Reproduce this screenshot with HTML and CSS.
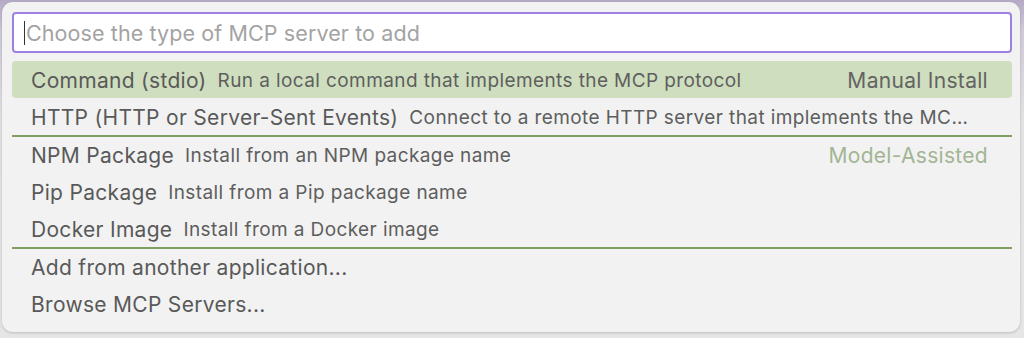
FILE: index.html
```html
<!DOCTYPE html>
<html lang="en">
<head>
<meta charset="utf-8">
<title>Add MCP server</title>
<link rel="stylesheet" href="styles.css">
</head>
<body>
<div class="panel">
  <div class="input"><span class="caret"></span><span class="placeholder">Choose the type of MCP server to add</span></div>
  <ul class="list">
    <li class="row selected"><span class="label">Command (stdio)</span><span class="desc">Run a local command that implements the MCP protocol</span><span class="group">Manual Install</span></li>
    <li class="row"><span class="label">HTTP (HTTP or Server-Sent Events)</span><span class="desc">Connect to a remote HTTP server that implements the MC…</span></li>
    <li class="row sep"><span class="label">NPM Package</span><span class="desc">Install from an NPM package name</span><span class="group muted">Model-Assisted</span></li>
    <li class="row"><span class="label">Pip Package</span><span class="desc">Install from a Pip package name</span></li>
    <li class="row"><span class="label">Docker Image</span><span class="desc">Install from a Docker image</span></li>
    <li class="row sep"><span class="label">Add from another application...</span></li>
    <li class="row"><span class="label">Browse MCP Servers...</span></li>
  </ul>
</div>
</body>
</html>
```

FILE: styles.css
```css
* { box-sizing: border-box; }
html, body { margin: 0; padding: 0; }
body {
  width: 1024px;
  height: 338px;
  overflow: hidden;
  background: linear-gradient(180deg, #b4aac6 0px, #cfc9d9 30px, #e3e3e3 120px, #e6e6e6 100%);
  font-family: Inter, "Noto Sans", sans-serif;
}
.panel {
  margin: 2px 0 0 2px;
  width: 1018px;
  height: 330px;
  background: #f2f2f2;
  border-radius: 11px;
  box-shadow: 0 1px 3px rgba(0,0,0,0.18);
  padding: 10px 8px 0 10px;
}
.input {
  height: 41px;
  width: 1000px;
  background: #fff;
  border: 2px solid #9c80e2;
  border-radius: 4px;
  display: flex;
  align-items: center;
  padding-left: 10px;
}
.caret {
  width: 1px;
  height: 24px;
  background: #333;
  margin-right: 1px;
}
.placeholder {
  color: #a3a3a3;
  font-size: 21.5px;
  letter-spacing: 0.1px;
  white-space: nowrap;
}
.list {
  list-style: none;
  margin: 8px 0 0 0;
  padding: 0;
  width: 1000px;
}
.row {
  height: 37px;
  display: flex;
  align-items: center;
  padding: 2px 24px 0 19px;
  white-space: nowrap;
  color: #5c5c5c;
  border-radius: 4px;
}
.row.selected { background: #cfdebe; }
.row.sep {
  border-top: 2px solid #7f9f62;
  border-radius: 0;
  height: 38px;
  padding-bottom: 1px;
}
.label {
  font-size: 21px;
  letter-spacing: 0.3px;
  color: #595959;
}
.desc {
  font-size: 19px;
  letter-spacing: 0.4px;
  color: #5e5e5e;
  margin-left: 11px;
  flex: 1;
  overflow: hidden;
}
.group {
  font-size: 21px;
  letter-spacing: 0.3px;
  color: #636363;
  margin-left: 12px;
}
.group.muted { color: #a2b594; }
```
